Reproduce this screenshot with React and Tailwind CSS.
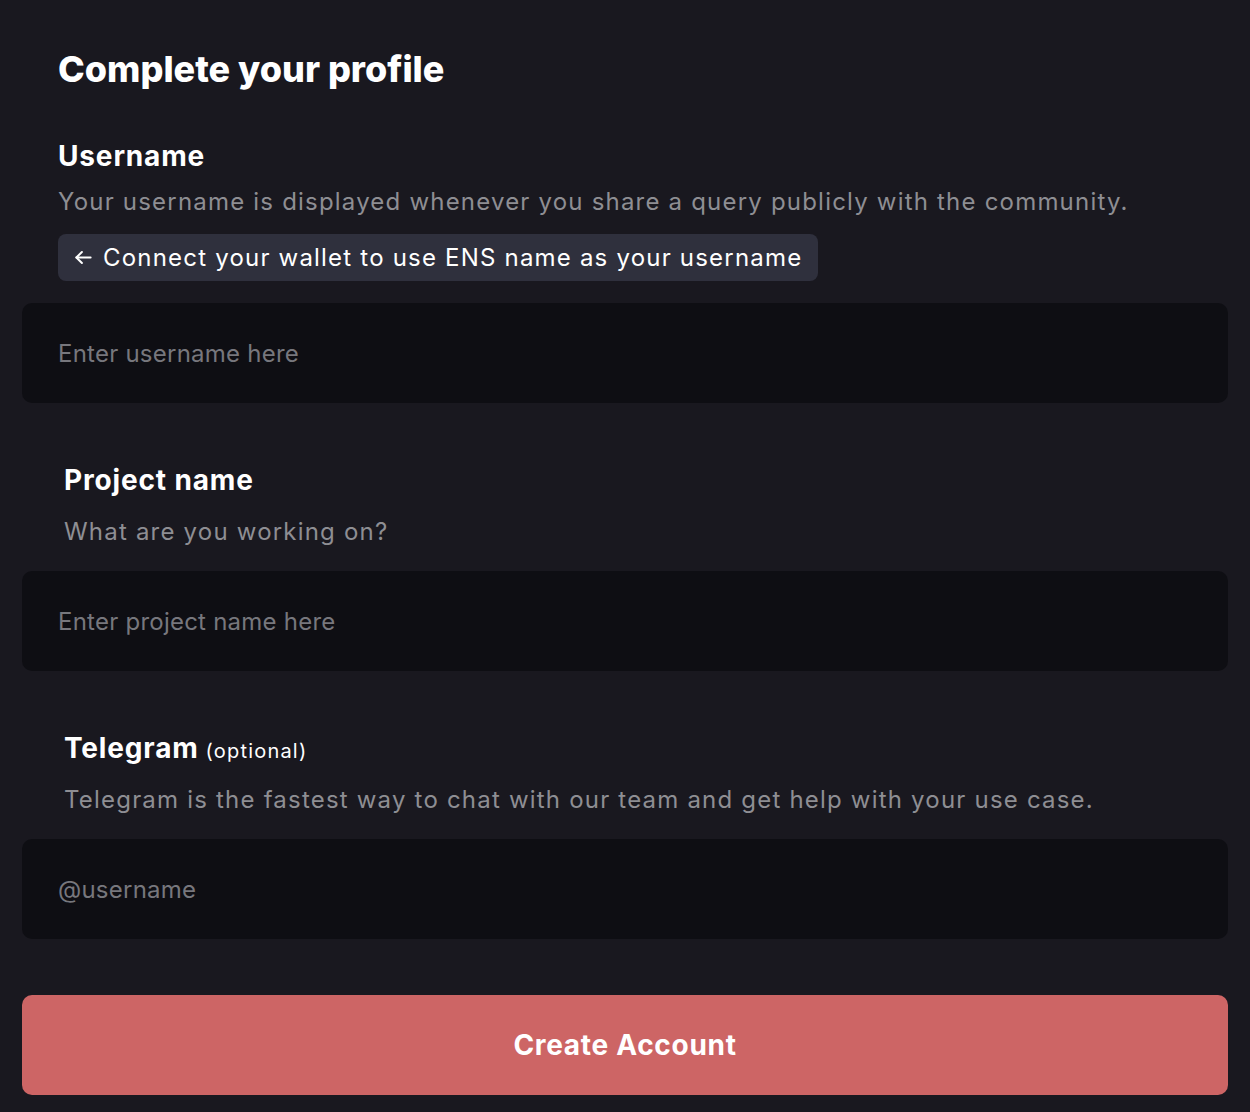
import React, { useState } from 'react';

function Field({ label, optional, description, placeholder, value, onChange }) {
  return (
    <div className="flex flex-col">
      <div className="px-[42px]">
        <h3 className="text-[28px] leading-[36px] font-bold tracking-[0.03em] text-white">
          {label}
          {optional && <span className="text-[20px] leading-none font-normal tracking-[0.06em]"> (optional)</span>}
        </h3>
        <p className="mt-[18px] text-[24px] leading-[32px] tracking-[0.05em] text-[#8e8e93]">{description}</p>
      </div>
      <input
        className="mt-[23px] h-[100px] w-full rounded-[10px] bg-[#0e0e13] px-[36px] text-[24px] tracking-[0.01em] text-white placeholder-[#77777d] outline-none"
        placeholder={placeholder}
        value={value}
        onChange={onChange}
      />
    </div>
  );
}

export default function App() {
  const [username, setUsername] = useState('');
  const [project, setProject] = useState('');
  const [telegram, setTelegram] = useState('');

  return (
    <div className="min-h-screen bg-[#19181f] px-[22px] pb-[17px]" style={{ fontFamily: 'Inter, "Noto Sans", sans-serif' }}>
      <div className="flex flex-col">
        <h1 className="pt-[47px] px-[36px] text-[36px] leading-[44px] font-extrabold text-white">Complete your profile</h1>

        {/* username block */}
        <div className="mt-[47px] px-[36px]">
          <h3 className="text-[28px] leading-[36px] font-bold tracking-[0.03em] text-white">Username</h3>
          <p className="mt-[12px] text-[24px] leading-[32px] tracking-[0.05em] text-[#8e8e93]">
            Your username is displayed whenever you share a query publicly with the community.
          </p>
          <button className="mt-[16px] flex h-[47px] items-center gap-[10px] rounded-[8px] bg-[#2f303d] px-[16px] text-[24px] tracking-[0.05em] text-white">
            <svg width="19" height="19" viewBox="0 0 24 24" fill="none" stroke="currentColor" strokeWidth="2.5" strokeLinecap="round" strokeLinejoin="round">
              <path d="M21 12H3" />
              <path d="M10 5l-7 7 7 7" />
            </svg>
            Connect your wallet to use ENS name as your username
          </button>
        </div>
        <input
          className="mt-[22px] h-[100px] w-full rounded-[10px] bg-[#0e0e13] px-[36px] text-[24px] tracking-[0.01em] text-white placeholder-[#77777d] outline-none"
          placeholder="Enter username here"
          value={username}
          onChange={(e) => setUsername(e.target.value)}
        />

        <div className="mt-[59px]">
          <Field
            label="Project name"
            description="What are you working on?"
            placeholder="Enter project name here"
            value={project}
            onChange={(e) => setProject(e.target.value)}
          />
        </div>

        <div className="mt-[59px]">
          <Field
            label="Telegram"
            optional
            description="Telegram is the fastest way to chat with our team and get help with your use case."
            placeholder="@username"
            value={telegram}
            onChange={(e) => setTelegram(e.target.value)}
          />
        </div>

        <button className="mt-[56px] h-[100px] w-full rounded-[10px] bg-[#cd6565] text-[28px] font-bold tracking-wide text-white">
          Create Account
        </button>
      </div>
    </div>
  );
}
